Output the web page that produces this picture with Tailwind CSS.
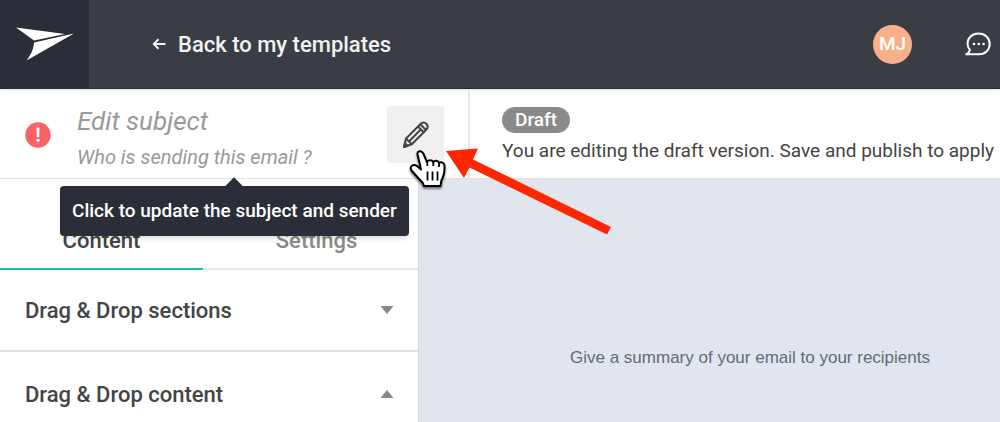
<!DOCTYPE html>
<html lang="en">
<head>
    <meta charset="UTF-8">
    <meta name="viewport" content="width=device-width, initial-scale=1.0">
    <title>Edit template</title>
    <script src="https://cdn.jsdelivr.net/npm/@tailwindcss/browser@4"></script>
</head>
<body class="min-h-screen flex flex-col overflow-hidden bg-white font-['Roboto',sans-serif] text-[#444]">
    <!-- Top bar -->
    <header class="relative z-10 flex h-[89px] shrink-0 items-stretch bg-[#3a3d45] border-b border-[#2b2e38] text-white shadow-sm">
        <a href="/" aria-label="Home" class="w-[89px] shrink-0 bg-[#2b2e38] flex items-center justify-center">
            <svg class="w-[58px] h-[34px]" viewBox="0 0 58 34" fill="#fff">
                <path d="M0 0.500 L49 7 L18 13.500 Z"/>
                <path d="M58 6.500 L10.500 33.500 C15.500 27 17.500 22 18 15.500 Z"/>
            </svg>
        </a>
        <a href="/templates" class="ml-[63px] flex items-center gap-3 text-[22px] font-medium text-[#f2f2f2]">
            <svg class="w-[14px] h-3" viewBox="0 0 14 12" fill="none" stroke="currentColor" stroke-width="2">
                <path d="M13.500 6 H2 M6.500 1.300 L1.800 6 L6.500 10.700"/>
            </svg>
            Back to my templates
        </a>
        <div class="ml-auto flex items-center gap-[53px] pr-[9px]">
            <button class="w-[39px] h-[39px] rounded-full bg-[#f8b088] text-[19px] font-medium">MJ</button>
            <button aria-label="Messages">
                <svg class="w-[26px] h-6" viewBox="0 0 26 24" fill="none" stroke="#fff" stroke-width="2">
                    <path d="M13.500 1.500 C7 1.500 2.500 6 2.500 11.500 C2.500 14.300 3.500 16.300 5 18 C4.300 20 3 21.500 1.200 22.300 H14 C20.500 22.300 24.700 17.800 24.700 12 C24.700 6 20 1.500 13.500 1.500 Z" stroke-linejoin="round"/>
                    <g fill="#fff" stroke="none">
                        <circle cx="9" cy="12" r="1.300"/>
                        <circle cx="13.800" cy="12" r="1.300"/>
                        <circle cx="18.600" cy="12" r="1.300"/>
                    </g>
                </svg>
            </button>
        </div>
    </header>

    <!-- Subject and status -->
    <section class="relative z-20 flex h-[90px] shrink-0 border-b border-[#e2e2e2]">
        <div class="relative w-[470px] shrink-0 flex items-center border-r-2 border-[#e8e8e8] pt-[2px] pl-[25px] pr-6">
            <svg class="w-[26px] h-[26px] shrink-0" viewBox="0 0 26 26">
                <circle cx="13" cy="13" r="12.700" fill="#fa6068"/>
                <path d="M11.500 5.500 H14.500 L14.200 15 H11.800 Z" fill="#fff"/>
                <circle cx="13" cy="18.300" r="1.700" fill="#fff"/>
            </svg>
            <div class="ml-[26px] pt-2 italic text-[#999]">
                <h1 class="text-[26px] leading-8">Edit subject</h1>
                <p class="mt-1 text-xl leading-8">Who is sending this email ?</p>
            </div>
            <div class="relative ml-auto">
                <button aria-label="Edit subject and sender" aria-describedby="edit-tip" class="flex w-[57px] h-[57px] items-center justify-center rounded bg-[#f0f0f0]">
                    <svg class="w-7 h-7" viewBox="0 0 28 28" fill="none" stroke="#444" stroke-width="2" stroke-linejoin="round">
                        <path d="M2 26 L4 17.500 L18.500 3 C20.500 1 22.500 1.200 24.200 2.800 C26 4.600 26.200 6.800 24.200 8.800 L9.800 23.200 Z"/>
                        <path d="M16 5.500 L21.700 11.200 M18.500 3.500 L24 9 M4 17.500 L9.800 23.200 M7 20.500 L18.700 8.500"/>
                        <path d="M2 26 L3 22.300 L5.500 24.800 Z" fill="#444"/>
                    </svg>
                </button>
                <svg class="absolute left-[22px] top-[42px] z-20 w-10 h-11 pointer-events-none drop-shadow-[0_2px_1px_rgba(0,0,0,0.5)]" viewBox="0 0 40 44">
                    <path d="M8.500 6 C8 3 12.500 2 14.300 5.500 L18 14 C19 11.500 23 11.500 24.300 14 C26 12 29.300 12.500 30 15 C32 13.500 35.500 14.500 35.500 18 C35.800 24 35.500 27 32.500 32 L31.500 38 H15 L13.500 34.500 C10 31 6.500 27 2.500 22.500 C0 18.500 4.500 15.500 8 18 L12 21.500 Z" fill="#fff" stroke="#000" stroke-width="2" stroke-linejoin="round"/>
                    <path d="M18.300 14 V18 M24.300 14 V18 M30 15 V19 M18.500 23.500 V32.500 M23.500 23.500 V32.500 M28.500 23.500 V32.500" stroke="#000" stroke-width="1.800"/>
                </svg>
                <svg class="absolute left-[58px] top-[41px] z-10 w-[168px] h-[90px] pointer-events-none" viewBox="0 0 168 90" fill="#ff2600">
                    <path d="M1 4 L33 1.500 L28 12.500 L166 80 L162 87.500 L24.500 20.500 L19 31 Z"/>
                </svg>
            </div>
            <div id="edit-tip" role="tooltip" class="absolute left-[60px] top-[97px] rounded bg-[#2b2e38] px-3 py-3 text-[19px] leading-[26px] font-medium text-white whitespace-nowrap shadow-md">
                Click to update the subject and sender
                <span class="absolute -top-[6px] left-1/2 size-[13px] -translate-x-1/2 rotate-45 bg-[#2b2e38]"></span>
            </div>
        </div>
        <div class="flex flex-1 flex-col items-start justify-center overflow-hidden pt-1 pl-8">
            <span class="rounded-full bg-[#8a8a8a] px-[13px] text-[19px] leading-[26px] font-medium text-white">Draft</span>
            <p class="mt-1 text-[19px] leading-7 whitespace-nowrap">You are editing the draft version. Save and publish to apply</p>
        </div>
    </section>

    <main class="flex flex-1">
        <!-- Sidebar -->
        <aside class="w-[419px] shrink-0 border-r border-[#d5d8df] bg-white shadow-sm">
            <div role="tablist" class="flex h-[91px] border-b-2 border-[#e6e6e6]">
                <button role="tab" aria-selected="true" class="-mb-[2px] w-[203px] border-b-2 border-[#1fbf9c] pt-[34px] text-[22px] font-medium">Content</button>
                <button role="tab" aria-selected="false" class="flex-1 pt-[34px] pl-3 text-[22px] font-medium text-[#8a8a8a]">Settings</button>
            </div>
            <button aria-expanded="false" class="flex w-full h-[82px] items-center justify-between border-b-2 border-[#e2e2e2] pl-[25px] pr-6 text-[22px] font-medium">
                Drag &amp; Drop sections
                <svg class="w-[14px] h-2" viewBox="0 0 14 8" fill="#888"><path d="M0.500 0 H13.500 L7 8 Z"/></svg>
            </button>
            <button aria-expanded="true" class="flex w-full h-[84px] items-center justify-between pl-[25px] pr-6 text-[22px] font-medium">
                Drag &amp; Drop content
                <svg class="w-[14px] h-2" viewBox="0 0 14 8" fill="#888"><path d="M0.500 8 H13.500 L7 0 Z"/></svg>
            </button>
        </aside>
        <!-- Email canvas -->
        <div class="flex-1 bg-[#e1e5ee] pt-[167px] pl-[81px] text-center font-['Liberation_Sans',sans-serif] text-[17px] leading-6 text-[#5f6b7c]">
            Give a summary of your email to your recipients
        </div>
    </main>
</body>
</html>
